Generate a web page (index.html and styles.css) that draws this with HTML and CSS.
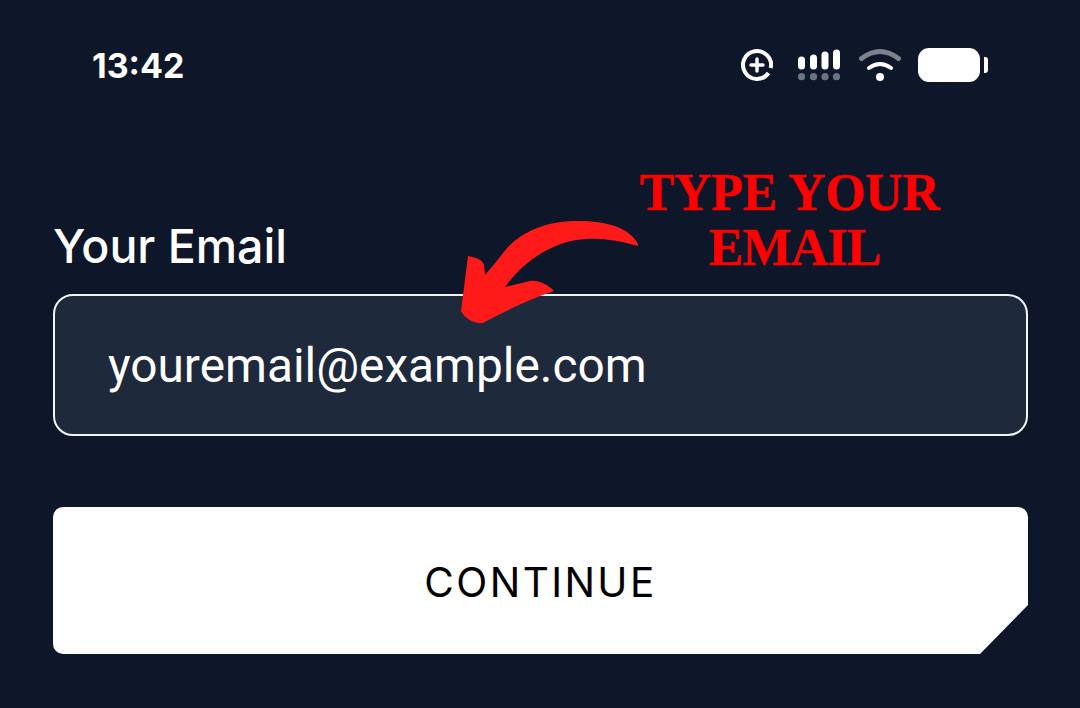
FILE: index.html
```html
<!DOCTYPE html>
<html lang="en">
<head>
  <meta charset="UTF-8">
  <meta name="viewport" content="width=device-width, initial-scale=1.0">
  <title>Your Email</title>
  <link rel="stylesheet" href="styles.css">
</head>
<body>
  <div class="status-bar">
    <span class="time">13:42</span>
    <div class="status-icons">
      <svg class="icon-data" viewBox="0 0 32 34" fill="none" stroke="#fff">
        <path d="M27.5 25A14 14 0 1 1 29.7 20" stroke-width="4"/>
        <path d="M16 11v12M10 17h12" stroke-width="3.4" stroke-linecap="round"/>
      </svg>
      <svg class="icon-signal" viewBox="0 0 44 34" fill="#fff">
        <rect x="0" y="8.5" width="7" height="13" rx="3.5"/>
        <rect x="12" y="6.5" width="7" height="15" rx="3.5"/>
        <rect x="23.5" y="3.5" width="7" height="18" rx="3.5"/>
        <rect x="35" y="1.5" width="7" height="20" rx="3.5"/>
        <g fill="#6b7280">
          <circle cx="3.5" cy="28.7" r="3.6"/>
          <circle cx="15.5" cy="28.7" r="3.6"/>
          <circle cx="27" cy="28.7" r="3.6"/>
          <circle cx="38.5" cy="28.7" r="3.6"/>
        </g>
      </svg>
      <svg class="icon-wifi" viewBox="0 0 44 34" fill="none" stroke-linecap="round">
        <path d="M3.5 10.5Q22 -3.5 40.5 10.5" stroke="#7d828c" stroke-width="5"/>
        <path d="M11 20Q22 12 33 20" stroke="#fff" stroke-width="4"/>
        <circle cx="22" cy="29" r="4" fill="#fff"/>
      </svg>
      <div class="battery">
        <div class="battery-body"></div>
        <div class="battery-nub"></div>
      </div>
    </div>
  </div>
  <div class="content">
    <label class="field-label" for="email">Your Email</label>
    <input class="email-input" id="email" type="text" value="youremail@example.com" readonly>
    <button class="continue-btn">CONTINUE</button>

    <div class="note">TYPE YOUR<br><span class="note-last">EMAIL</span></div>
    <svg class="note-arrow" viewBox="0 0 180 110">
      <path fill="#ff1a1a" d="M8 41C15 42 23 45 24 50L25 60C32 52 40 42 47 33C62 17 85 7 113 6C142 5 169 11 178 29L178 31C160 26 145 23 125 24C92 26 62 48 45 72L70 66C79 65 88 70 94 76C70 84 45 96 23 108C15 109 5 104 1 96Z"/>
    </svg>
  </div>
</body>
</html>
```

FILE: styles.css
```css
* { box-sizing: border-box; }
body {
  margin: 0;
  height: 708px;
  overflow: hidden;
  background: #0e1729;
  font-family: Inter, sans-serif;
  color: #fff;
}
.status-bar {
  height: 130px;
  padding: 0 92px;
  display: flex;
  justify-content: space-between;
  align-items: center;
}
.time { font-size: 34px; font-weight: 700; }
.status-icons { display: flex; align-items: center; gap: 16px; }
.icon-data { width: 32px; height: 34px; margin-right: 9px; }
.icon-signal { width: 44px; height: 34px; }
.icon-wifi { width: 44px; height: 34px; }
.battery { display: flex; align-items: center; gap: 4px; }
.battery-body { width: 62px; height: 34px; background: #fff; border-radius: 11px; }
.battery-nub { width: 4px; height: 16px; background: #fff; border-radius: 0 3px 3px 0; }

.content { position: relative; padding: 90px 52px 0 53px; }
.field-label {
  display: block;
  height: 52px;
  margin-bottom: 22px;
  font-size: 46.5px;
  font-weight: 500;
  line-height: 52px;
}
.email-input {
  display: block;
  width: 100%;
  height: 142px;
  margin-bottom: 71px;
  padding: 2px 53px 0;
  background: #1e293b;
  border: 2px solid #f1f5f9;
  border-radius: 20px;
  color: #fff;
  font-family: Roboto, sans-serif;
  font-size: 47.8px;
  outline: none;
}
.continue-btn {
  display: block;
  width: 100%;
  height: 147px;
  padding-top: 4px;
  background: #fff;
  border: none;
  border-radius: 10px;
  clip-path: polygon(0 0, 100% 0, 100% calc(100% - 49px), calc(100% - 48px) 100%, 0 100%);
  color: #000;
  font-family: Inter, sans-serif;
  font-size: 40.5px;
  letter-spacing: 2.4px;
}

/* red annotation drawn over the form */
.note {
  position: absolute;
  left: 590px;
  top: 35px;
  width: 400px;
  text-align: center;
  color: #f00;
  font-family: "Liberation Serif", serif;
  font-size: 52px;
  font-weight: 700;
  letter-spacing: -0.3px;
  line-height: 55px;
  -webkit-text-stroke: 0.5px #f00;
}
.note-last { padding-left: 10px; letter-spacing: -0.8px; }
.note-arrow {
  position: absolute;
  left: 460px;
  top: 85px;
  width: 180px;
  height: 110px;
}
```
